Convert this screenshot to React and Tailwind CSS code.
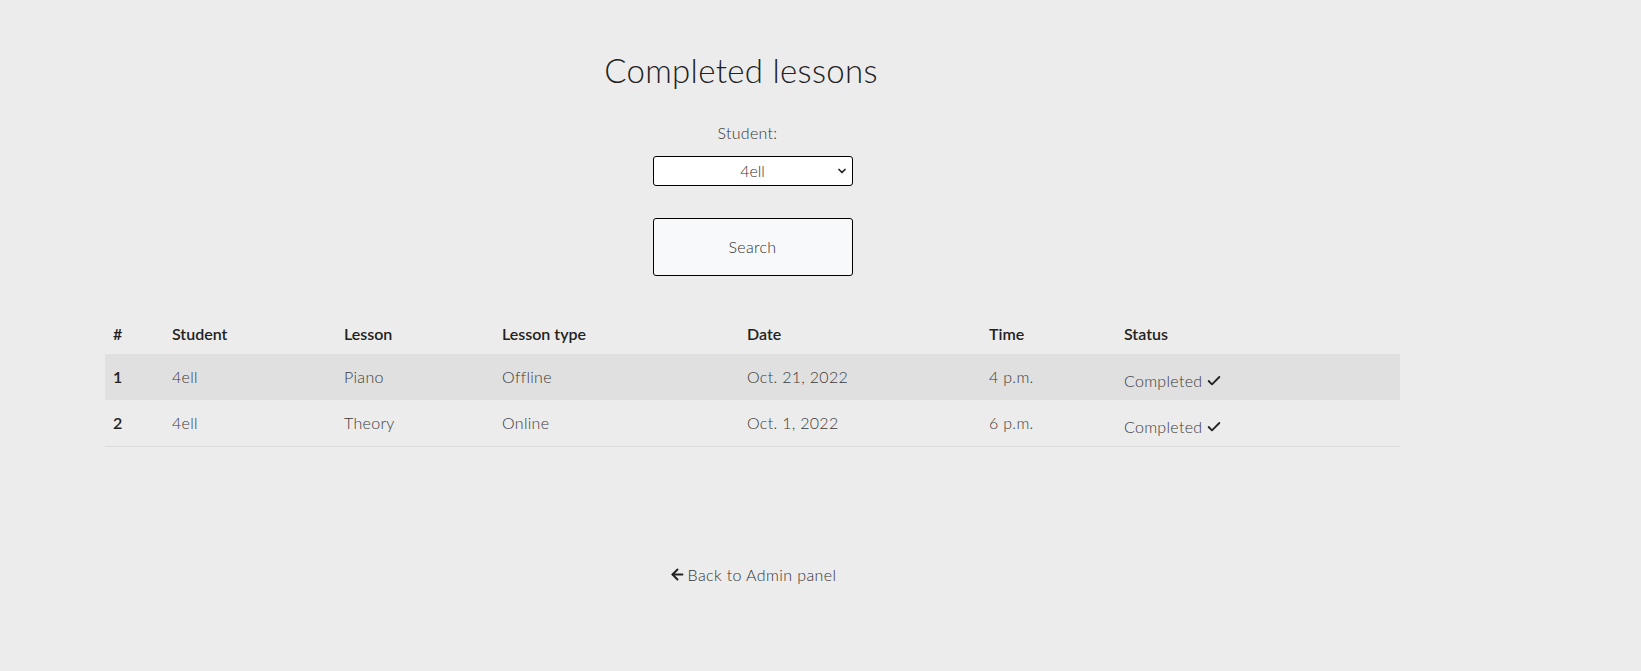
import { ArrowLeft, Check, ChevronDown } from 'lucide-react';

const lessons = [
  { id: 1, student: '4ell', lesson: 'Piano', type: 'Offline', date: 'Oct. 21, 2022', time: '4 p.m.' },
  { id: 2, student: '4ell', lesson: 'Theory', type: 'Online', date: 'Oct. 1, 2022', time: '6 p.m.' },
];

const cols = [
  { key: 'id', label: '#', w: 'w-[59px]' },
  { key: 'student', label: 'Student', w: 'w-[172px]' },
  { key: 'lesson', label: 'Lesson', w: 'w-[158px]' },
  { key: 'type', label: 'Lesson type', w: 'w-[245px]' },
  { key: 'date', label: 'Date', w: 'w-[242px]' },
  { key: 'time', label: 'Time', w: 'w-[135px]' },
  { key: 'status', label: 'Status', w: 'w-[284px]' },
];

const cell = 'px-2 py-[11px] text-[16px] font-light leading-6 tracking-[0.3px] text-[#3a3a3a]';

export default function App() {
  return (
    <div
      className="min-h-[671px] bg-[#ececec] text-[#212529]"
      style={{ fontFamily: 'Lato, "Noto Sans", sans-serif' }}
    >
      <div className="ml-[105px] flex w-[1295px] flex-col items-center pt-[51px]">
        <h1 className="mr-[23px] text-[33px] font-light leading-[1.2] tracking-[0.3px] text-[#222]">
          Completed lessons
        </h1>

        <form className="mt-[30px] flex flex-col items-center" onSubmit={(e) => e.preventDefault()}>
          <label className="mr-[10px] text-[16px] font-light leading-6 tracking-[0.3px] text-[#333]">Student:</label>
          <div className="relative mt-[11px] h-[30px] w-[200px]">
            <select className="h-full w-full appearance-none rounded-[3px] border border-black bg-white text-center text-[16px] font-light text-[#333]">
              <option>4ell</option>
            </select>
            <ChevronDown
              className="pointer-events-none absolute right-[5px] top-[9px] h-[12px] w-[12px]"
              strokeWidth={3.5}
            />
          </div>
          <button
            type="submit"
            className="mt-[32px] h-[58px] w-[200px] rounded-[3px] border border-black bg-[#f8f9fa] text-[16px] font-light tracking-[0.3px] text-[#333]"
          >
            Search
          </button>
        </form>

        <table className="mt-[38px] w-full border-collapse text-left">
          <thead>
            <tr>
              {cols.map((c) => (
                <th key={c.key} className={`${c.w} px-2 py-2 text-[16px] font-semibold leading-6 text-[#222]`}>
                  {c.label}
                </th>
              ))}
            </tr>
          </thead>
          <tbody>
            {lessons.map((l, i) => (
              <tr key={l.id} className={i % 2 === 0 ? 'bg-[#e0e0e0]' : 'border-b border-[#dcdcdc]'}>
                <td className="px-2 py-[11px] text-[16px] font-semibold leading-6 text-[#222]">{l.id}</td>
                <td className={cell}>{l.student}</td>
                <td className={cell}>{l.lesson}</td>
                <td className={cell}>{l.type}</td>
                <td className={cell}>{l.date}</td>
                <td className={cell}>{l.time}</td>
                <td className="px-2 pt-[15px] pb-[7px] text-[16px] font-light leading-6 tracking-[0.3px] text-[#3a3a3a]">
                  <span className="inline-flex items-center gap-[4px]">
                    Completed
                    <Check className="h-[16px] w-[16px] text-[#222]" strokeWidth={2.75} />
                  </span>
                </td>
              </tr>
            ))}
          </tbody>
        </table>

        <a href="#" className="mt-[116px] flex items-center gap-[2px] text-[16px] font-light tracking-[0.4px] text-[#333] no-underline">
          <ArrowLeft className="h-[17px] w-[17px] text-[#222]" strokeWidth={2.75} />
          Back to Admin panel
        </a>
      </div>
    </div>
  );
}
